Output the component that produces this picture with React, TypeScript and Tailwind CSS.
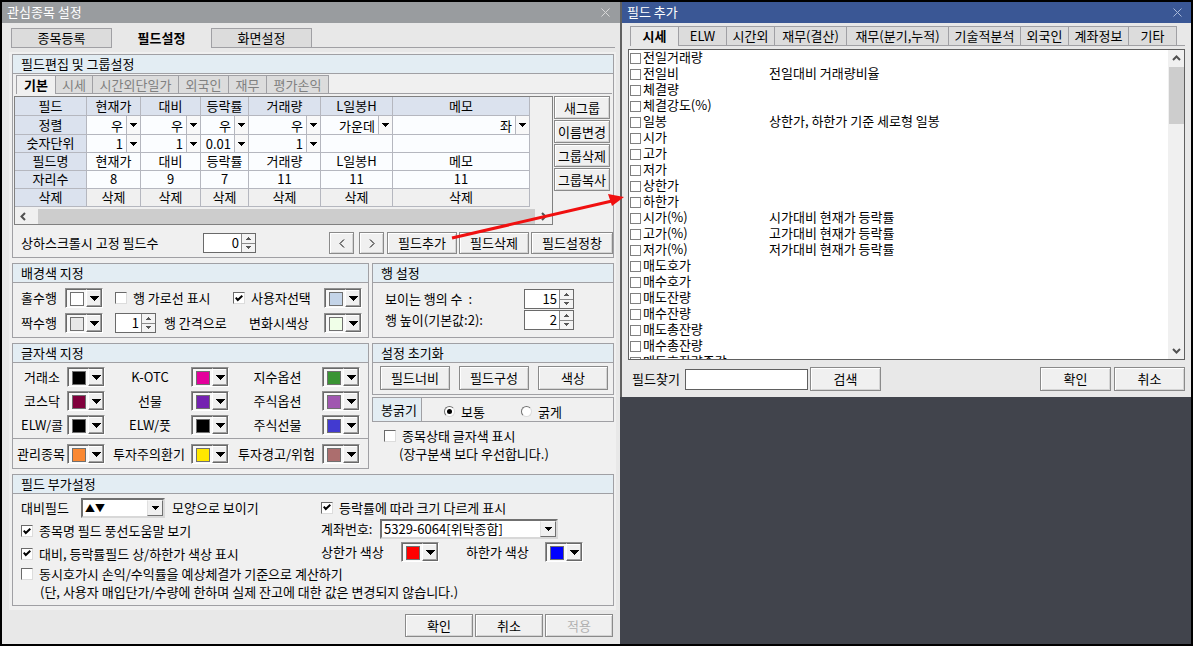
import React from "react";

type BoxProps = { children?: React.ReactNode; className?: string };

function Group({ title, children, className = "" }: BoxProps & { title: string }) {
  return (
    <section className={`border border-[#a0a0a4] ${className}`}>
      <h2 className="h-[19px] border-b border-[#a0a0a4] bg-[#e3edf3] pl-2 leading-[17px]">{title}</h2>
      {children}
    </section>
  );
}

function Button({ children, className = "", disabled = false, label }: BoxProps & { disabled?: boolean; label?: string }) {
  return (
    <button
      type="button"
      disabled={disabled}
      aria-label={label}
      className={`flex shrink-0 items-center justify-center border border-[#8a8a8a] bg-[#f0f0f0] shadow-[inset_1px_1px_0_#ffffff,inset_-1px_-1px_0_#d4d4d4] disabled:text-[#b0b0b0] ${className}`}
    >
      {children}
    </button>
  );
}

function Down({ small = false }: { small?: boolean }) {
  return small ? (
    <svg width="7" height="4" viewBox="0 0 7 4" shapeRendering="crispEdges" aria-hidden="true">
      <path d="M0 0h7v1h-1v1h-1v1h-1v1h-1v-1h-1v-1h-1v-1h-1z" fill="#000" />
    </svg>
  ) : (
    <svg width="9" height="5" viewBox="0 0 9 5" shapeRendering="crispEdges" aria-hidden="true">
      <path d="M0 0h9v1h-1v1h-1v1h-1v1h-1v1h-1v-1h-1v-1h-1v-1h-1v-1h-1z" fill="#000" />
    </svg>
  );
}

function ColorPicker({ swatch, label }: { swatch: string; label: string }) {
  return (
    <button
      type="button"
      aria-label={label}
      className="flex h-5 w-[38px] shrink-0 border border-t-[#909090] border-r-white border-b-white border-l-[#909090] bg-white"
    >
      <span className="flex h-[18px] w-5 items-center justify-center border-t border-l border-[#696969] bg-[#f8f8f8]">
        <span className={`block h-[14px] w-[14px] border border-[#707070] ${swatch}`} />
      </span>
      <span className="flex h-[18px] w-4 items-center justify-center border border-t-[#696969] border-r-[#696969] border-b-[#696969] border-l-white bg-[#f0f0f0] shadow-[inset_-1px_-1px_0_#a0a0a0,inset_0_1px_0_#ffffff]">
        <Down />
      </span>
    </button>
  );
}

function Check({ children, checked = false, className = "" }: BoxProps & { checked?: boolean }) {
  return (
    <label className={`flex items-center gap-[6px] whitespace-nowrap ${className}`}>
      <span className="grid h-3 w-3 place-items-center">
        <input
          type="checkbox"
          defaultChecked={checked}
          className="peer h-3 w-3 appearance-none border border-t-[#6a6a6a] border-r-[#dcdcdc] border-b-[#dcdcdc] border-l-[#6a6a6a] bg-white [grid-area:1/1]"
        />
        <svg className="pointer-events-none invisible [grid-area:1/1] peer-checked:visible" width="8" height="7" viewBox="0 0 8 7" aria-hidden="true">
          <path d="M0.7 2.6 L2.8 5 L7.3 0.8" fill="none" stroke="#000" strokeWidth="2" />
        </svg>
      </span>
      {children}
    </label>
  );
}

function Radio({ children, checked = false }: BoxProps & { checked?: boolean }) {
  return (
    <label className="flex items-center gap-[6px]">
      <span className="grid h-[11px] w-[11px] place-items-center">
        <input
          type="radio"
          name="candle"
          defaultChecked={checked}
          className="peer h-[11px] w-[11px] appearance-none rounded-full border border-t-[#707070] border-r-[#dcdcdc] border-b-[#dcdcdc] border-l-[#707070] bg-white [grid-area:1/1]"
        />
        <span className="pointer-events-none invisible h-[5px] w-[5px] rounded-full bg-black [grid-area:1/1] peer-checked:visible" />
      </span>
      {children}
    </label>
  );
}

function Spinner({ id, value, className }: { id: string; value: string; className: string }) {
  return (
    <span className={`flex h-5 shrink-0 border border-[#6a6a6a] bg-white ${className}`}>
      <input id={id} defaultValue={value} className="w-0 min-w-0 flex-1 bg-transparent pr-[2px] text-right outline-none" />
      <span className="flex w-[14px] flex-col border-l border-[#8a8a8a]">
        <button type="button" aria-label="증가" className="flex flex-1 items-center justify-center border-b border-[#8a8a8a] bg-[#f4f4f4]">
          <svg width="5" height="3" viewBox="0 0 5 3" shapeRendering="crispEdges"><path d="M2 0h1v1h1v1h1v1h-5v-1h1v-1h1z" fill="#555" /></svg>
        </button>
        <button type="button" aria-label="감소" className="flex flex-1 items-center justify-center bg-[#f4f4f4]">
          <svg width="5" height="3" viewBox="0 0 5 3" shapeRendering="crispEdges"><path d="M0 0h5v1h-1v1h-1v1h-1v-1h-1v-1h-1z" fill="#555" /></svg>
        </button>
      </span>
    </span>
  );
}

function CellSelect({ value, label }: { value: string; label: string }) {
  return (
    <span className="grid h-full">
      <select aria-label={label} className="h-full w-full appearance-none bg-transparent pr-[17px] [text-align-last:right] outline-none [grid-area:1/1]">
        <option>{value}</option>
      </select>
      <span className="pointer-events-none flex h-full w-[14px] items-center justify-center justify-self-end border-l border-[#b5b7bf] bg-[#f8f8f8] pr-px [grid-area:1/1]">
        <Down small />
      </span>
    </span>
  );
}

function Combo({ id, value, className }: { id: string; value: string; className: string }) {
  return (
    <span className={`grid h-5 shrink-0 border-2 border-t-[#707070] border-r-[#d8d8d8] border-b-[#d8d8d8] border-l-[#707070] bg-white ${className}`}>
      <select id={id} className="h-4 w-full appearance-none bg-transparent pl-[2px] leading-4 outline-none [grid-area:1/1]">
        <option>{value}</option>
      </select>
      <span className="pointer-events-none flex h-4 w-4 items-center justify-center justify-self-end border border-t-[#f8f8f8] border-r-[#707070] border-b-[#707070] border-l-[#e0e0e0] bg-[#f0f0f0] [grid-area:1/1]">
        <Down small />
      </span>
    </span>
  );
}

function Chevron({ dir, className = "" }: { dir: "up" | "down" | "left" | "right"; className?: string }) {
  const paths = {
    up: "M1 6 L4.5 2.5 L8 6",
    down: "M1 3 L4.5 6.5 L8 3",
    left: "M6 1 L2.5 4.5 L6 8",
    right: "M3 1 L6.5 4.5 L3 8",
  };
  return (
    <svg width="9" height="9" viewBox="0 0 9 9" className={className} aria-hidden="true">
      <path d={paths[dir]} fill="none" stroke="#505050" strokeWidth="2" />
    </svg>
  );
}

function CloseIcon({ color }: { color: string }) {
  return (
    <svg width="9" height="9" viewBox="0 0 9 9" aria-hidden="true">
      <path d="M0.5 0.5 L8.5 8.5 M8.5 0.5 L0.5 8.5" stroke={color} strokeWidth="1" />
    </svg>
  );
}

const fields = ["현재가", "대비", "등락률", "거래량", "L일봉H", "메모"];
const aligns = ["우", "우", "우", "우", "가운데", "좌"];
const units = ["1", "1", "0.01", "1", "", ""];
const digits = ["8", "9", "7", "11", "11", "11"];

const cell = "border-r border-b border-[#b5b7bf]";
const td = `${cell} p-0 pb-[2px] text-center font-normal`;
const rowHead = `${td} bg-[#dbe2ee]`;

function FieldTable() {
  return (
    <div className="min-w-0 flex-1 border border-[#808080] bg-[#f0f0f0]">
      <table className="w-[515px] table-fixed border-separate border-spacing-0 bg-[#fbfdff] leading-[15px]">
        <colgroup>
          <col className="w-[72px]" />
          <col className="w-[54px]" />
          <col className="w-[60px]" />
          <col className="w-[48px]" />
          <col className="w-[72px]" />
          <col className="w-[72px]" />
          <col className="w-[137px]" />
        </colgroup>
        <thead>
          <tr className="h-[19px]">
            <th className={rowHead}>필드</th>
            {fields.map((f) => <th key={f} className={rowHead}>{f}</th>)}
          </tr>
        </thead>
        <tbody>
          <tr className="h-[19px]">
            <th className={rowHead}>정렬</th>
            {aligns.map((a, i) => (
              <td key={i} className={`${cell} h-[19px] p-0`}><CellSelect value={a} label={`${fields[i]} 정렬`} /></td>
            ))}
          </tr>
          <tr className="h-[18px]">
            <th className={rowHead}>숫자단위</th>
            {units.map((u, i) => (
              <td key={i} className={`${cell} h-[18px] p-0`}>{u ? <CellSelect value={u} label={`${fields[i]} 숫자단위`} /> : null}</td>
            ))}
          </tr>
          <tr className="h-[18px]">
            <th className={rowHead}>필드명</th>
            {fields.map((f) => <td key={f} className={td}>{f}</td>)}
          </tr>
          <tr className="h-[18px]">
            <th className={rowHead}>자리수</th>
            {digits.map((d, i) => <td key={i} className={td}>{d}</td>)}
          </tr>
          <tr className="h-[18px]">
            <th className={rowHead}>삭제</th>
            {fields.map((f) => <td key={f} className={`${td} bg-[#f0f0f0]`}>삭제</td>)}
          </tr>
        </tbody>
      </table>
      <div className="mt-px flex h-4 items-center bg-[#f0f0f0]">
        <Chevron dir="left" className="ml-1" />
        <span className="mr-[4px] ml-[10px] h-[15px] flex-1 bg-[#cdcdcd]" />
        <Chevron dir="right" className="mr-1" />
      </div>
    </div>
  );
}

const innerTabs = [
  { name: "시세", width: "w-[37px]" },
  { name: "시간외단일가", width: "w-[86px]" },
  { name: "외국인", width: "w-[50px]" },
  { name: "재무", width: "w-[38px]" },
  { name: "평가손익", width: "w-[62px]" },
];

const textColors = [
  { name: "거래소", swatch: "bg-black" },
  { name: "K-OTC", swatch: "bg-[#e4009c]" },
  { name: "지수옵션", swatch: "bg-[#3a9434]" },
  { name: "코스닥", swatch: "bg-[#80003c]" },
  { name: "선물", swatch: "bg-[#7422b0]" },
  { name: "주식옵션", swatch: "bg-[#a057b0]" },
  { name: "ELW/콜", swatch: "bg-black" },
  { name: "ELW/풋", swatch: "bg-black" },
  { name: "주식선물", swatch: "bg-[#423ad0]" },
];
const statusColors = [
  { name: "관리종목", swatch: "bg-[#fa8832]" },
  { name: "투자주의환기", swatch: "bg-[#ffe800]" },
  { name: "투자경고/위험", swatch: "bg-[#ac6e6e]" },
];
const colorGrid = "grid grid-cols-[54px_38px_86px_38px_93px_38px] items-center";

function SettingsDialog() {
  return (
    <main className="flex min-h-full flex-col bg-[#e8e8e8]">
      <header className="flex h-[21px] items-center justify-between bg-[#999c9f] pr-[10px] pb-px pl-[5px] text-white">
        <h1>관심종목 설정</h1>
        <button type="button" aria-label="닫기"><CloseIcon color="#d8d8d8" /></button>
      </header>

      <nav className="mt-[5px] mr-[5px] ml-[9px] flex h-5 leading-4">
        <button type="button" className="w-[101px] border border-[#a0a0a4] bg-[#dcdcdc]">종목등록</button>
        <button type="button" className="w-[99px] font-bold">필드설정</button>
        <button type="button" className="w-[101px] border border-[#a0a0a4] bg-[#dcdcdc]">화면설정</button>
        <span className="flex-1 border-b border-[#a0a0a4]" />
      </nav>

      <div className="mt-1 mr-1 ml-[7px] flex flex-col gap-[5px] bg-[#f0f0f0] pt-[2px] pr-[2px] pb-1 pl-[3px]">
        <Group title="필드편집 및 그룹설정">
          <div className="mt-px mr-px ml-[3px] flex h-[19px] leading-4">
            <button type="button" className="w-[39px] border-t border-l border-[#a0a0a4] font-bold">기본</button>
            {innerTabs.map((t) => (
              <button key={t.name} type="button" className={`border-t border-b border-l border-[#a0a0a4] bg-[#dcdcdc] whitespace-nowrap text-[#808080] ${t.width}`}>{t.name}</button>
            ))}
            <span className="flex-1 border-b border-l border-[#a0a0a4]" />
          </div>
          <div className="mt-[2px] mr-[3px] ml-px flex items-start gap-px">
            <FieldTable />
            <div className="flex w-14 flex-col gap-px">
              {["새그룹", "이름변경", "그룹삭제", "그룹복사"].map((b) => (
                <Button key={b} className="h-[23px]">{b}</Button>
              ))}
            </div>
          </div>
          <div className="mt-[7px] mb-[3px] flex items-center pl-2">
            <label htmlFor="fixed" className="w-[182px]">상하스크롤시 고정 필드수</label>
            <Spinner id="fixed" value="0" className="w-[53px]" />
            <div className="ml-auto flex gap-[2px]">
              <Button className="mr-[3px] h-[22px] w-[25px]" label="왼쪽으로">
                <svg width="6" height="9" viewBox="0 0 6 9"><path d="M5 0.5 L1 4.5 L5 8.5" fill="none" stroke="#000" /></svg>
              </Button>
              <Button className="mr-px h-[22px] w-[25px]" label="오른쪽으로">
                <svg width="6" height="9" viewBox="0 0 6 9"><path d="M1 0.5 L5 4.5 L1 8.5" fill="none" stroke="#000" /></svg>
              </Button>
              <Button className="h-[22px] w-[70px]">필드추가</Button>
              <Button className="h-[22px] w-[70px]">필드삭제</Button>
              <Button className="h-[22px] w-[82px]">필드설정창</Button>
            </div>
          </div>
        </Group>

        <div className="grid grid-cols-[357fr_242fr] gap-[3px]">
          <Group title="배경색 지정">
            <div className="grid grid-cols-[44px_50px_118px_91px_38px] gap-y-px pt-[3px] pb-[2px] pl-2">
              <span className="flex h-6 items-center">홀수행</span>
              <span className="flex items-center"><ColorPicker swatch="bg-white" label="홀수행 색상" /></span>
              <Check>행 가로선 표시</Check>
              <Check checked>사용자선택</Check>
              <span className="flex items-center"><ColorPicker swatch="bg-[#c4d4e8]" label="사용자선택 색상" /></span>
              <span className="flex h-6 items-center">짝수행</span>
              <span className="flex items-center"><ColorPicker swatch="bg-[#e8e8e8]" label="짝수행 색상" /></span>
              <span className="flex items-center gap-2">
                <Spinner id="interval" value="1" className="w-[41px]" />
                <label htmlFor="interval">행 간격으로</label>
              </span>
              <span className="flex items-center pl-4">변화시색상</span>
              <span className="flex items-center"><ColorPicker swatch="bg-[#f0ffe8]" label="변화시색상" /></span>
            </div>
          </Group>
          <Group title="행 설정">
            <div className="grid grid-cols-[139px_auto] items-center justify-start gap-y-px pt-[6px] pl-3">
              <label htmlFor="rows" className="whitespace-pre">보이는 행의 수  :</label>
              <Spinner id="rows" value="15" className="w-[50px]" />
              <label htmlFor="height">행 높이(기본값:2):</label>
              <Spinner id="height" value="2" className="w-[50px]" />
            </div>
          </Group>
        </div>

        <div className="grid grid-cols-[357fr_242fr] gap-[3px]">
          <Group title="글자색 지정">
            <div className={`${colorGrid} pt-[2px] pb-px`}>
              {textColors.map((c) => (
                <React.Fragment key={c.name}>
                  <span className="flex h-6 items-center justify-center pl-1 whitespace-nowrap">{c.name}</span>
                  <ColorPicker swatch={c.swatch} label={`${c.name} 색상`} />
                </React.Fragment>
              ))}
            </div>
            <div className={`${colorGrid} border-t border-[#a0a0a4] pt-[3px] pb-[2px]`}>
              {statusColors.map((c) => (
                <React.Fragment key={c.name}>
                  <span className="flex h-6 items-center justify-center pl-[2px] whitespace-nowrap">{c.name}</span>
                  <ColorPicker swatch={c.swatch} label={`${c.name} 색상`} />
                </React.Fragment>
              ))}
            </div>
          </Group>
          <div className="flex flex-col">
            <Group title="설정 초기화">
              <div className="flex justify-between pt-[3px] pr-[5px] pb-1 pl-[7px]">
                <Button className="h-6 w-[70px]">필드너비</Button>
                <Button className="h-6 w-[70px]">필드구성</Button>
                <Button className="h-6 w-[70px]">색상</Button>
              </div>
            </Group>
            <div role="radiogroup" aria-labelledby="candle-title" className="mt-[2px] flex h-[25px] border border-[#a0a0a4]">
              <span id="candle-title" className="flex w-[49px] items-center border-r border-[#a0a0a4] bg-[#e3edf3] pl-2 whitespace-nowrap">봉굵기</span>
              <span className="flex items-center gap-9 pt-1 pl-[22px]">
                <Radio checked>보통</Radio>
                <Radio>굵게</Radio>
              </span>
            </div>
            <Check className="mt-[5px] h-[18px] pl-3">종목상태 글자색 표시</Check>
            <p className="pl-[27px] leading-[18px]">(장구분색 보다 우선합니다.)</p>
          </div>
        </div>

        <Group title="필드 부가설정">
          <div className="pt-[3px] pb-[5px] pl-2">
            <div className="grid grid-cols-[300px_auto] justify-start">
              <div>
                <div className="flex h-[22px] items-center">
                  <label htmlFor="shape" className="w-[60px]">대비필드</label>
                  <Combo id="shape" value="▲▼" className="mr-[7px] w-[84px] text-[10px]" />
                  모양으로 보이기
                </div>
                <Check checked className="h-6">종목명 필드 풍선도움말 보기</Check>
                <Check checked className="h-[21px]">대비, 등락률필드 상/하한가 색상 표시</Check>
              </div>
              <div>
                <Check checked className="h-[21px]">등락률에 따라 크기 다르게 표시</Check>
                <div className="flex h-[22px] items-center">
                  <label htmlFor="account" className="w-[59px]">계좌번호:</label>
                  <Combo id="account" value="5329-6064[위탁종합]" className="w-[178px]" />
                </div>
                <div className="flex h-6 items-center">
                  <span className="w-20">상한가 색상</span>
                  <ColorPicker swatch="bg-[#ff0000]" label="상한가 색상" />
                  <span className="ml-[27px] w-[79px]">하한가 색상</span>
                  <ColorPicker swatch="bg-[#0000ff]" label="하한가 색상" />
                </div>
              </div>
            </div>
            <Check className="h-5">동시호가시 손익/수익률을 예상체결가 기준으로 계산하기</Check>
            <p className="pl-[19px] leading-4">(단, 사용자 매입단가/수량에 한하며 실제 잔고에 대한 값은 변경되지 않습니다.)</p>
          </div>
        </Group>
      </div>

      <footer className="mt-1 flex justify-end gap-[2px] pr-[7px] pb-[7px]">
        <Button className="h-[23px] w-[68px]">확인</Button>
        <Button className="h-[23px] w-[68px]">취소</Button>
        <Button className="h-[23px] w-[68px]" disabled>적용</Button>
      </footer>
    </main>
  );
}

const addTabs = [
  { name: "ELW", width: "w-12" },
  { name: "시간외", width: "w-12" },
  { name: "재무(결산)", width: "w-[72px]" },
  { name: "재무(분기,누적)", width: "w-[102px]" },
  { name: "기술적분석", width: "w-[72px]" },
  { name: "외국인", width: "w-12" },
  { name: "계좌정보", width: "w-[60px]" },
  { name: "기타", width: "w-12" },
];

const items: [string, string?][] = [
  ["전일거래량"],
  ["전일비", "전일대비 거래량비율"],
  ["체결량"],
  ["체결강도(%)"],
  ["일봉", "상한가, 하한가 기준 세로형 일봉"],
  ["시가"],
  ["고가"],
  ["저가"],
  ["상한가"],
  ["하한가"],
  ["시가(%)", "시가대비 현재가 등락률"],
  ["고가(%)", "고가대비 현재가 등락률"],
  ["저가(%)", "저가대비 현재가 등락률"],
  ["매도호가"],
  ["매수호가"],
  ["매도잔량"],
  ["매수잔량"],
  ["매도총잔량"],
  ["매수총잔량"],
  ["매도호잔량증감"],
];

function AddFieldDialog() {
  return (
    <aside className="border-l-2 border-[#606060] bg-[#e8e8e8]">
      <header className="flex h-[21px] items-center justify-between bg-[#3a5795] pr-[9px] pb-px pl-[5px] text-white">
        <h1>필드 추가</h1>
        <button type="button" aria-label="닫기"><CloseIcon color="#a8b8d8" /></button>
      </header>
      <nav className="mt-[3px] mr-[6px] ml-2 flex h-5 leading-4">
        <button type="button" className="w-12 border-t border-l border-[#a0a0a4] pb-[2px] font-bold">시세</button>
        {addTabs.map((t) => (
          <button key={t.name} type="button" className={`border-t border-b border-l border-[#a0a0a4] bg-[#dcdcdc] pb-px whitespace-nowrap ${t.width}`}>{t.name}</button>
        ))}
        <span className="flex-1 border-b border-l border-[#a0a0a4]" />
      </nav>
      <div className="mt-[3px] mr-[6px] ml-[6px] flex h-[311px] overflow-hidden border border-[#606060] bg-white">
        <ul className="flex-1 overflow-hidden">
          {items.map(([name, desc]) => (
            <li key={name} className="flex h-4 items-center pb-[2px] pl-px leading-[14px]">
              <label className="flex w-[139px] items-center gap-[2px]">
                <input type="checkbox" className="mt-[2px] h-[11px] w-[11px] appearance-none border border-[#808080] bg-white" />
                {name}
              </label>
              <span>{desc}</span>
            </li>
          ))}
        </ul>
        <div className="flex w-4 flex-col items-center bg-[#f0f0f0] py-1">
          <Chevron dir="up" />
          <span className="mt-1 h-[57px] w-[15px] bg-[#cdcdcd]" />
          <Chevron dir="down" className="mt-auto" />
        </div>
      </div>
      <footer className="flex items-center pt-[7px] pr-[6px] pb-[6px] pl-[10px]">
        <label htmlFor="find" className="w-[53px]">필드찾기</label>
        <input id="find" className="mr-[2px] h-[21px] w-[123px] border border-[#606060] bg-white px-1" />
        <Button className="h-6 w-[71px]">검색</Button>
        <Button className="mr-[3px] ml-auto h-6 w-[71px]">확인</Button>
        <Button className="h-6 w-[71px]">취소</Button>
      </footer>
    </aside>
  );
}

export default function App() {
  return (
    <div className="relative grid min-h-screen grid-cols-[618fr_571fr] border-2 border-black bg-[#41444c] font-['Noto_Sans_CJK_KR',sans-serif] text-[13px] leading-[18px] text-black">
      <SettingsDialog />
      <div>
        <AddFieldDialog />
      </div>
      <svg className="pointer-events-none absolute top-[186px] left-[446px]" width="176" height="54" viewBox="0 0 176 54" aria-hidden="true">
        <path d="M4 50 L164 13" stroke="#f01010" strokeWidth="3" />
        <path d="M176 9 L160 6 L164 18 Z" fill="#f01010" />
      </svg>
    </div>
  );
}
